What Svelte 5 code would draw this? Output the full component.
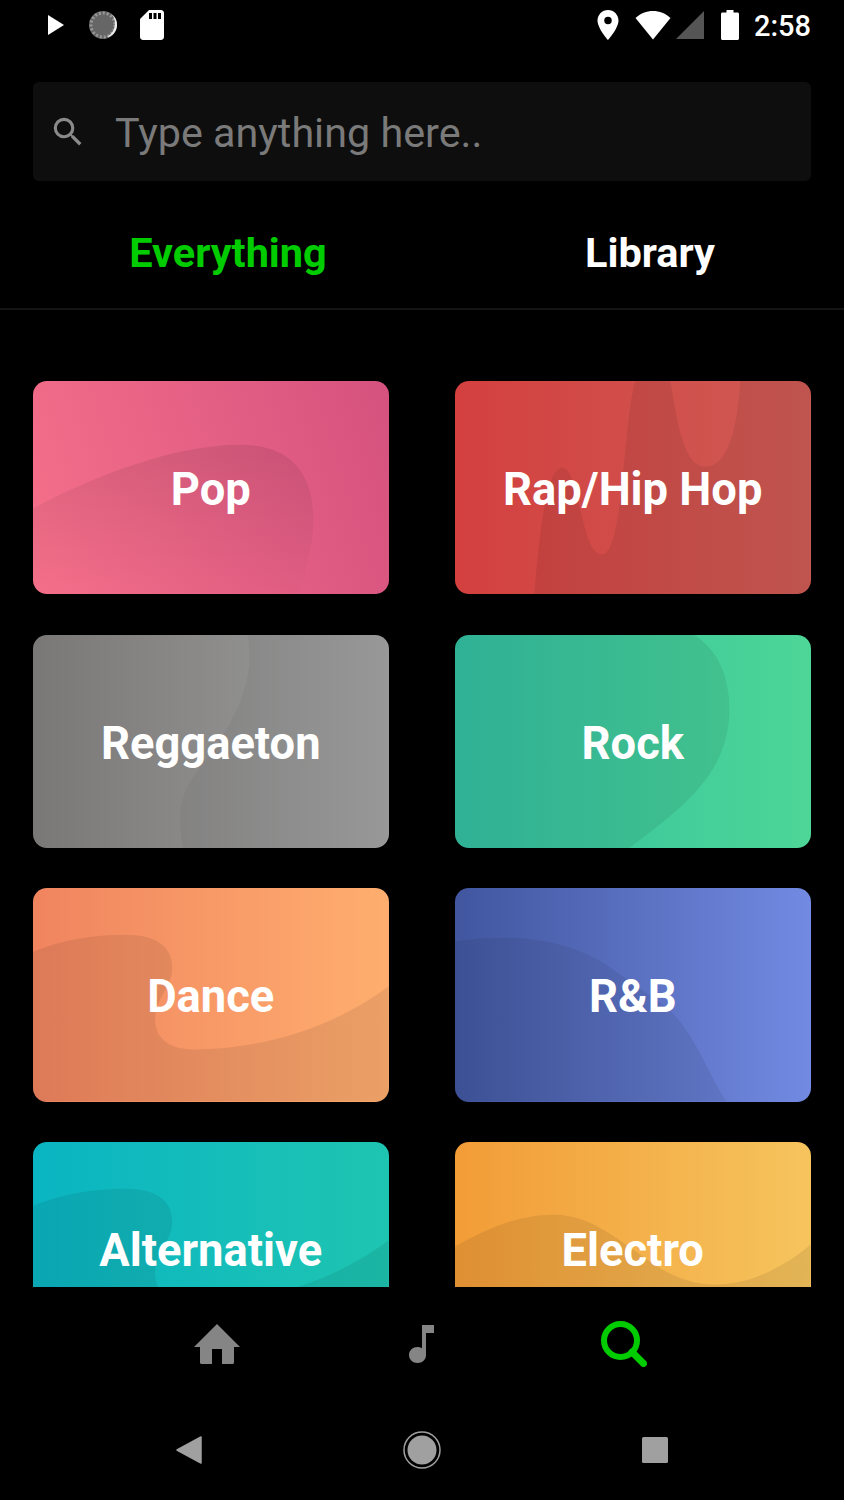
<script>
	const dip = 'M0 64C30 52 60 47 92 47C125 47 139 60 139 80C139 100 122 110 122 132C122 150 135 162 160 162C230 162 300 140 355 99L355 214L0 214Z';

	const genres = [
		{ name: 'Pop', angle: 72, from: '#f6708a', to: '#d5527f', alpha: 0.09, fade: 0.005, shape: 'M0 128C60 96 140 64 207 64C255 64 280 90 280 140C280 165 272 190 266 214L0 214Z' },
		{ name: 'Rap/Hip Hop', angle: 90, from: '#d3403f', to: '#cf5b55', alpha: 0.075, fade: 0.075, shape: 'M79 214C84 160 90 87 107 87C125 87 125 174 147 174C168 174 168 40 180 0L215 0C222 40 228 86 250 86C275 86 282 40 285 0L355 0L355 214Z' },
		{ name: 'Reggaeton', angle: 90, from: '#7a7877', to: '#9e9e9e', alpha: 0.04, fade: 0.04, shape: 'M214 0C222 40 205 75 190 100C175 125 147 150 147 180C147 195 148 205 150 214L355 214L355 0Z' },
		{ name: 'Rock', angle: 90, from: '#33bfa2', to: '#4dd696', alpha: 0.075, fade: 0.075, shape: 'M0 0L239 0C262 15 274 40 274 75C274 140 225 175 174 214L0 214Z' },
		{ name: 'Dance', angle: 90, from: '#f0845f', to: '#ffae6f', alpha: 0.08, fade: 0.08, shape: dip },
		{ name: 'R&B', angle: 90, from: '#41569f', to: '#728ae2', alpha: 0.07, fade: 0.07, shape: 'M0 54C15 51 30 50 50 50C100 50 135 65 158 82C190 105 212 118 223 132C245 160 255 190 271 214L0 214Z' },
		{ name: 'Alternative', angle: 90, from: '#0ab5c3', to: '#1ec5b1', alpha: 0.08, fade: 0.08, shape: dip },
		{ name: 'Electro', angle: 90, from: '#f29c37', to: '#f6c45d', alpha: 0.08, fade: 0.08, shape: 'M0 105C35 85 65 73 99 73C140 73 170 105 207 128C225 138 240 143 260 143C295 143 330 125 355 103L355 214L0 214Z' }
	];
</script>

<div class="screen">
	<div class="statusBar">
		<div class="statusGroup">
			<svg class="play" width="18" height="22" viewBox="0 0 18 22"><path d="M1 1L17 11L1 21Z" fill="#fff" /></svg>
			<svg class="disc" width="32" height="32" viewBox="0 0 32 32">
				<circle cx="16" cy="16" r="14" fill="#666" />
				<circle cx="16" cy="16" r="12" fill="none" stroke="#999" stroke-width="3" stroke-dasharray="2 2" />
				<path d="M25 5.500C30 12 29 23 20 28C24 28.500 30 23 30 16C30 11 28 8 25 5.500Z" fill="#eee" />
			</svg>
			<svg class="sd" width="36" height="36" viewBox="0 0 24 24"><path d="M18 2h-8L4.020 8 4 20c0 1.100.9 2 2 2h12c1.100 0 2-.9 2-2V4c0-1.100-.9-2-2-2zm-6 6h-2V4h2v4zm3 0h-2V4h2v4zm3 0h-2V4h2v4z" fill="#fff" /></svg>
		</div>
		<div class="statusGroup right">
			<svg width="36" height="36" viewBox="0 0 24 24"><path d="M12 2C8.130 2 5 5.130 5 9c0 5.250 7 13 7 13s7-7.750 7-13c0-3.870-3.130-7-7-7zm0 9.500a2.500 2.500 0 0 1 0-5 2.500 2.500 0 0 1 0 5z" fill="#fff" /></svg>
			<svg class="wifi" width="36" height="30" viewBox="0 0 36 30"><path d="M0.500 8C10 -1.500 26 -1.500 35.500 8L18 29.500Z" fill="#fff" /></svg>
			<svg class="signal" width="28" height="28" viewBox="0 0 28 28"><path d="M28 0V28H0Z" fill="#555" /></svg>
			<svg class="battery" width="18" height="30" viewBox="0 0 18 30"><path d="M5.500 0H12.500V2.500H16.500C17.300 2.500 18 3.200 18 4V28.500C18 29.300 17.300 30 16.500 30H1.500C.7 30 0 29.300 0 28.500V4C0 3.200 .7 2.500 1.500 2.500H5.500Z" fill="#fff" /></svg>
			<span class="time">2:58</span>
		</div>
	</div>

	<div class="search">
		<svg width="38" height="38" viewBox="0 0 24 24"><path d="M15.500 14h-.79l-.28-.27A6.471 6.471 0 0 0 16 9.500 6.500 6.500 0 1 0 9.500 16c1.610 0 3.090-.59 4.230-1.570l.27.28v.79l5 4.990L20.490 19l-4.990-5zm-6 0C7.010 14 5 11.990 5 9.500S7.010 5 9.500 5 14 7.010 14 9.500 11.990 14 9.500 14z" fill="#8a8a8a" /></svg>
		<span class="placeholder">Type anything here..</span>
	</div>

	<div class="tabs">
		<div class="tab active">Everything</div>
		<div class="tab">Library</div>
	</div>

	<div class="content">
		<div class="grid">
			{#each genres as genre, i}
				<div class="card" style="background: linear-gradient({genre.angle}deg, {genre.from}, {genre.to})">
					<svg class="wave" viewBox="0 0 355 214" preserveAspectRatio="none">
						<defs>
							<linearGradient id="fade{i}" x1="0" y1="0" x2="0" y2="1">
								<stop offset="0" stop-color="#000" stop-opacity={genre.alpha} />
								<stop offset="1" stop-color="#000" stop-opacity={genre.fade} />
							</linearGradient>
						</defs>
						<path d={genre.shape} fill="url(#fade{i})" />
					</svg>
					<span class="label">{genre.name}</span>
				</div>
			{/each}
		</div>
	</div>

	<div class="bottomNav">
		<div class="navItem">
			<svg width="46" height="40" viewBox="0 0 46 40"><path d="M23 0L46 23H40V38.500C40 39.300 39.300 40 38.500 40H28V25H18V40H7.500C6.700 40 6 39.300 6 38.500V23H0Z" fill="#858585" /></svg>
		</div>
		<div class="navItem note">
			<svg width="26" height="38" viewBox="0 0 26 38"><path d="M13 0H25V8H17V30C17 34.500 13.400 38 8.500 38C3.800 38 0 34.500 0 30C0 25.500 3.800 22 8.500 22C10.200 22 11.700 22.400 13 23.200Z" fill="#858585" /></svg>
		</div>
		<div class="navItem">
			<svg width="46" height="46" viewBox="0 0 46 46"><circle cx="19.500" cy="19.500" r="16.500" fill="none" stroke="#00cc00" stroke-width="6" /><path d="M31 31L42.500 42.500" stroke="#00cc00" stroke-width="7" stroke-linecap="round" /></svg>
		</div>
	</div>

	<div class="androidNav">
		<svg width="26" height="28" viewBox="0 0 26 28"><path d="M25 1V27L1 14Z" fill="#a0a0a0" stroke="#a0a0a0" stroke-width="1.500" stroke-linejoin="round" /></svg>
		<svg width="38" height="38" viewBox="0 0 38 38"><circle cx="19" cy="19" r="18" fill="none" stroke="#a0a0a0" stroke-width="1.500" /><circle cx="19" cy="19" r="14.500" fill="#a0a0a0" /></svg>
		<svg width="26" height="26" viewBox="0 0 26 26"><rect width="26" height="26" rx="1.500" fill="#a0a0a0" /></svg>
	</div>
</div>

<style>
	:global(body) {
		background: #000;
	}

	.screen {
		width: 844px;
		height: 1500px;
		display: flex;
		flex-direction: column;
		background: #000;
		overflow: hidden;
		font-family: Roboto, 'Liberation Sans', sans-serif;
	}

	.statusBar {
		height: 50px;
		flex: none;
		display: flex;
		justify-content: space-between;
		align-items: center;
		padding: 0 33px 0 47px;
	}

	.statusGroup {
		display: flex;
		align-items: center;
	}

	.disc {
		margin-left: 22px;
	}

	.sd {
		margin-left: 15px;
	}

	.wifi {
		margin-left: 9px;
	}

	.signal {
		margin-left: 5px;
	}

	.battery {
		margin-left: 17px;
	}

	.time {
		margin-left: 15px;
		padding-top: 2px;
		color: #fff;
		font-size: 29px;
		font-weight: 500;
	}

	.search {
		flex: none;
		height: 99px;
		margin: 32px 33px 0;
		padding-left: 16px;
		display: flex;
		align-items: center;
		background: #0e0e0e;
		border-radius: 6px;
	}

	.placeholder {
		margin-left: 28px;
		padding-top: 3px;
		color: #7a7a7a;
		font-size: 41.3px;
	}

	.tabs {
		flex: none;
		height: 129px;
		display: flex;
		border-bottom: 2px solid #141414;
		box-sizing: border-box;
		padding-top: 16px;
	}

	.tab {
		width: 422px;
		padding-left: 34px;
		box-sizing: border-box;
		display: flex;
		justify-content: center;
		align-items: center;
		color: #fff;
		font-size: 41.5px;
		font-weight: 700;
	}

	.tab.active {
		color: #00cc00;
	}

	.content {
		flex: 1;
		overflow: hidden;
		padding: 71px 33px 0;
	}

	.grid {
		display: grid;
		grid-template-columns: 355.5px 355.5px;
		grid-auto-rows: 213.2px;
		column-gap: 66.5px;
		row-gap: 40.47px;
	}

	.card {
		position: relative;
		display: flex;
		justify-content: center;
		align-items: center;
		border-radius: 14px;
		overflow: hidden;
	}

	.wave {
		position: absolute;
		inset: 0;
		width: 100%;
		height: 100%;
	}

	.label {
		position: relative;
		padding-top: 4px;
		color: #fff;
		font-size: 45.3px;
		font-weight: 700;
	}

	.bottomNav {
		flex: none;
		height: 113px;
		box-sizing: border-box;
		padding-right: 3px;
		padding-top: 1px;
		display: flex;
		justify-content: center;
		align-items: center;
		background: #000;
	}

	.navItem {
		width: 203.5px;
		display: flex;
		justify-content: center;
	}

	.navItem.note {
		padding-left: 3px;
		box-sizing: border-box;
	}

	.androidNav {
		flex: none;
		height: 100px;
		padding: 0 176px;
		display: flex;
		justify-content: space-between;
		align-items: center;
	}
</style>
